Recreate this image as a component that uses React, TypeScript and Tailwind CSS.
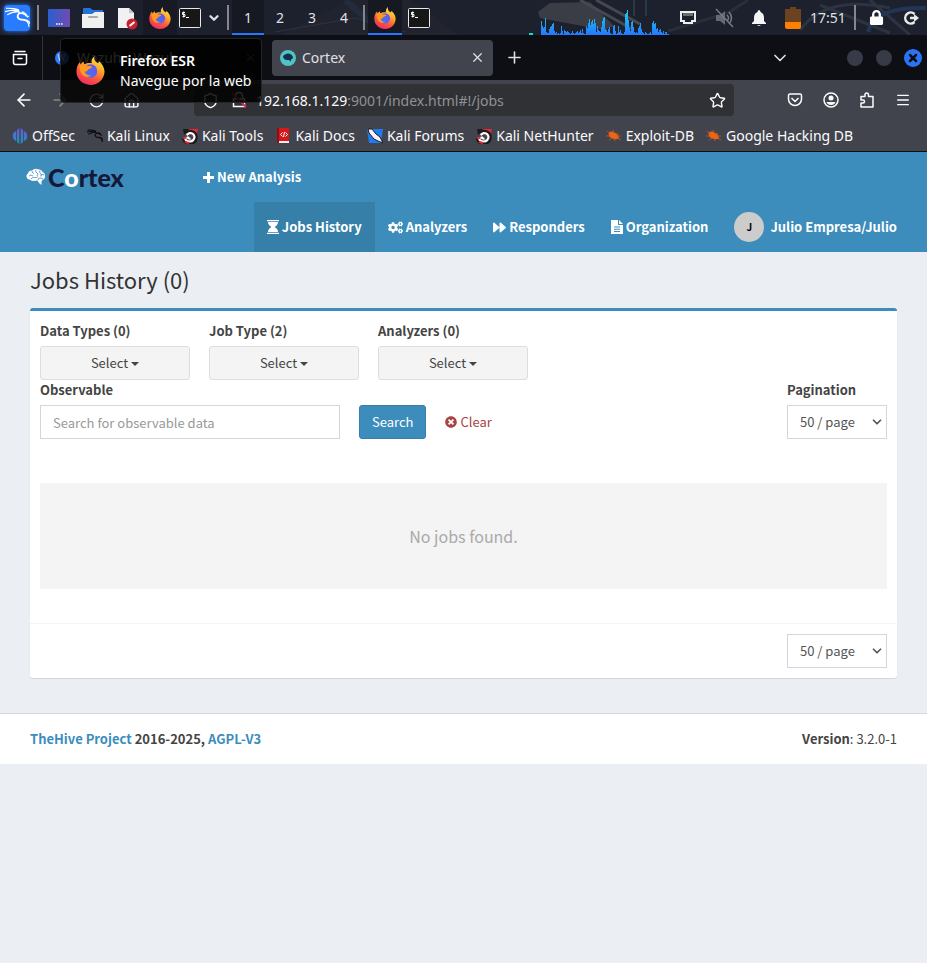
import type { ReactNode } from 'react';
import { FaCogs, FaForward, FaTimesCircle, FaLock } from 'react-icons/fa';
import { GiBrain } from 'react-icons/gi';
import { SiKalilinux } from 'react-icons/si';
import { ArrowLeft, ArrowRight, RotateCw, House, Shield, Star, Menu, X, Plus, ChevronDown } from 'lucide-react';

const uiFont = "font-['Noto_Sans','Open_Sans',sans-serif]";
const pageFont = "font-['Noto_Sans_CJK_SC','Noto_Sans',sans-serif]";

function FirefoxLogo({ className }: { className: string }) {
  return (
    <svg viewBox="0 0 32 32" className={className} aria-hidden="true">
      <defs>
        <linearGradient id="ffBody" x1="0.8" y1="0" x2="0.3" y2="1">
          <stop offset="0" stopColor="#ffe84a" />
          <stop offset="0.35" stopColor="#ffb02a" />
          <stop offset="0.65" stopColor="#ff5b3a" />
          <stop offset="1" stopColor="#f02a66" />
        </linearGradient>
        <linearGradient id="ffGlobe" x1="0" y1="1" x2="1" y2="0">
          <stop offset="0" stopColor="#2f7df5" />
          <stop offset="1" stopColor="#7a4ee8" />
        </linearGradient>
      </defs>
      <path
        fill="url(#ffBody)"
        d="M20.500 0c-1 3 0 6 4 8 .6-.8.8-1.600.6-2.600C29 8.500 31.500 13 31.500 17.500 31 26 24.500 32 16 32S.5 25.500.5 17.500C.5 13 1.500 9.500 4.300 6.500L5 9.500c1-1.800 2.200-2.800 3.500-3.500 0 1.200.2 2.200.8 3 2-1 5-1.500 8-1C16.800 4.500 18 2 20.500 0z"
      />
      <circle cx="16" cy="16.500" r="7.500" fill="url(#ffGlobe)" />
      <path fill="#ff9a1e" d="M4 10.500c3-2.500 7-2 9 .8 2-.8 4-.3 5 .7-1 1.500-3 2-4.500 2.500-.5 2-2 2.500-4 3 1 3 4 4.500 7 4-3 3-9 1.500-11-3C4.500 16 3.500 13 4 10.500z" />
    </svg>
  );
}

function Terminal() {
  return (
    <svg viewBox="0 0 22 20" className="h-5 w-[22px]" aria-hidden="true">
      <rect x="0.5" y="0.5" width="21" height="19" rx="1" fill="#171718" stroke="#e8e8e8" />
      <path d="M6 4.500H3.500v2H6v2H3.500M4.700 3.500v6M7 9.500h3" stroke="#fff" fill="none" />
    </svg>
  );
}

const load = [
  14, 9, 7, 8, 17, 3, 2, 2, 6, 8, 9, 11, 12, 4, 2, 3, 1, 2, 1, 2, 9, 4, 1, 5, 4, 3, 4, 3, 2, 1, 2, 4, 2, 1, 2, 3, 4, 2, 3, 5,
  2, 6, 2, 1, 1, 9, 7, 12, 16, 10, 13, 15, 11, 16, 12, 3, 9, 5, 4, 3, 8, 14, 17, 18, 6, 5, 3, 6, 8, 2, 1, 1, 9, 10, 4, 1,
  2, 9, 3, 5, 2, 1, 1, 3, 21, 22, 25, 15, 7, 4, 13, 14, 8, 3, 2, 3, 2, 7, 9, 12, 6, 3, 2, 1, 3, 2, 1, 1, 2, 3, 1, 12, 14,
  11, 12, 6, 7, 3, 5, 6, 3, 2, 4, 1, 3, 3, 1, 1,
];

function LoadGraph() {
  return (
    <svg viewBox="0 0 140 34" className="h-[34px] w-[140px]" aria-hidden="true">
      <defs>
        <linearGradient id="load" gradientUnits="userSpaceOnUse" x1="0" y1="8" x2="0" y2="34">
          <stop offset="0" stopColor="#1ad6e8" />
          <stop offset="1" stopColor="#2478ff" />
        </linearGradient>
      </defs>
      <path d="M0 33h4" stroke="#18d8c0" strokeWidth="2" />
      {load.map((value, i) => (
        <rect key={i} x={12 + i} y={34 - value} width="1" height={value} fill="url(#load)" />
      ))}
    </svg>
  );
}

function Wallpaper() {
  return (
    <svg
      viewBox="0 0 927 35"
      preserveAspectRatio="none"
      className="absolute inset-0 h-full w-full"
      aria-hidden="true"
    >
      <rect width="927" height="35" fill="#1d202d" />
      <path d="M280 35 330 10l20-10h60l50 35z" fill="#21242f" />
      <path d="M275 32 355 18l50 14" stroke="#2c3442" fill="none" />
      <path d="M345 0 385 35" stroke="#2b4464" strokeWidth="6" opacity=".25" />
      <path d="M538 12 550 3l40-1 24 24-10 4-64-12z" fill="#3a3d45" />
      <path d="m580 0 54 30M596 0l44 24" stroke="#454850" strokeWidth="3" />
      <path d="M634 0v16M646 0v16" stroke="#2a3949" strokeWidth="2" />
      <path d="m668 31 60-18 20-13" stroke="#2a2e39" strokeWidth="3" fill="none" />
      <path d="M800 30c20-26 50-30 90-22M820 5l70 28M870 0l40 35" stroke="#2b3440" strokeWidth="3" fill="none" />
      <path d="M868 32c5-18 24-25 58-24" stroke="#233554" strokeWidth="4" fill="none" />
    </svg>
  );
}

function Divider() {
  return <span className="h-[25px] w-[2px] bg-[#85878d]" />;
}

function DesktopPanel() {
  return (
    <header className="relative h-[35px] bg-[#1d202d] text-[14px] text-[#dfe1e8]">
      <Wallpaper />
      <div className="relative flex h-full items-center">
        <button
          aria-label="Applications"
          className="ml-1 grid h-[26px] w-[26px] place-items-center rounded-sm bg-[#287cff] text-white shadow-[0_0_5px_#287cff]"
        >
          <SiKalilinux size={25} stroke="currentColor" strokeWidth={1} />
        </button>
        <span className="ml-[7px] flex"><Divider /></span>
        <svg viewBox="0 0 22 18" className="ml-[9px] h-[18px] w-[22px]" aria-hidden="true">
          <defs>
            <linearGradient id="desk"><stop stopColor="#2b5fd0" /><stop offset="1" stopColor="#704bb0" /></linearGradient>
          </defs>
          <rect width="22" height="18" rx="1" fill="url(#desk)" />
          <path d="M8 15h1.500M10.500 15H12M13 15h1.500" stroke="#fff" strokeWidth="1.500" />
        </svg>
        <svg viewBox="0 0 22 20" className="ml-3 h-5 w-[22px]" aria-hidden="true">
          <path d="M1 1q0-1 1-1h6l3 2h10v6H1z" fill="#2472d8" />
          <path d="M0 6h10l3-2h9v16H0z" fill="#f0f0f0" />
          <path d="M7 9h8" stroke="#aaa" strokeWidth="2" strokeLinecap="round" />
        </svg>
        <svg viewBox="0 0 22 24" className="ml-3 h-6 w-[22px]" aria-hidden="true">
          <path d="M2 2h11l5 5v15H2z" fill="#f1f1f1" />
          <path d="m13 2 5 5h-5z" fill="#c5c5c5" />
          <circle cx="16" cy="18" r="5.500" fill="#c8202c" />
          <path d="m13.500 20 5-4" stroke="#fff" strokeWidth="2" />
        </svg>
        <span className="ml-[5px] grid h-full w-[34px] place-items-center bg-[#14161f]/60">
          <FirefoxLogo className="h-[22px] w-[22px]" />
        </span>
        <span className="ml-[2px]"><Terminal /></span>
        <ChevronDown size={14} strokeWidth={4} className="ml-[6px]" />
        <span className="ml-[6px] flex"><Divider /></span>
        <nav className="ml-[3px] flex h-full" aria-label="Workspaces">
          {['1', '2', '3', '4'].map((n) => (
            <button
              key={n}
              className={n === '1' ? 'w-8 border-y-2 border-t-transparent border-b-[#2478ff] bg-[#161922]' : 'w-8'}
            >
              {n}
            </button>
          ))}
        </nav>
        <span className="ml-[3px] flex"><Divider /></span>
        <span className="ml-[3px] grid h-full w-[34px] place-items-center border-y-2 border-t-transparent border-b-[#2478ff] bg-[#161922]">
          <FirefoxLogo className="h-[22px] w-[22px]" />
        </span>
        <span className="ml-[6px]"><Terminal /></span>
        <div className="ml-auto flex h-full items-center pr-2">
          <LoadGraph />
          <svg viewBox="0 0 18 16" className="ml-[10px] h-4 w-[18px]" aria-hidden="true">
            <path d="M2 2h14v9h-3v2H5v-2H2z" fill="none" stroke="#eee" strokeWidth="2" />
            <path d="M5 3v3M7 3v3M9 3v3M11 3v3M13 3v3" stroke="#bbb" />
          </svg>
          <svg viewBox="0 0 20 20" className="ml-[18px] h-5 w-5" aria-hidden="true">
            <path d="M1 7h4l5-4v14l-5-4H1z" fill="#666973" />
            <path d="M12 7q3 3 0 6M14 4q5 6 0 12M1 1l17 18" fill="none" stroke="#777a82" strokeWidth="1.500" />
          </svg>
          <svg viewBox="0 0 16 16" className="ml-4 h-4 w-4" aria-hidden="true">
            <path d="M8 0a2 2 0 0 1 1.500 2C12 3 13 5 13 8v3l2 2v1H1v-1l2-2V8c0-3 1-5 3.500-6A2 2 0 0 1 8 0zM6 15h4l-2 1z" fill="#f5f5f5" />
          </svg>
          <svg viewBox="0 0 16 22" className="ml-[18px] h-[22px] w-4" aria-hidden="true">
            <path d="M5 0h6v2h5v14H0V2h5z" fill="#6b4320" />
            <path d="M0 15h16v5q0 2-2 2H2q-2 0-2-2z" fill="#ff7f00" />
          </svg>
          <span className="ml-[9px] w-9">17:51</span>
          <span className="ml-[8px] flex"><Divider /></span>
          <FaLock size={15} className="ml-[13px] text-white" />
          <svg viewBox="0 0 16 16" className="ml-[19px] h-4 w-4" aria-hidden="true">
            <path d="M11.500 4A5.500 5.500 0 1 0 11.500 12" fill="none" stroke="#e8eaec" strokeWidth="2.500" />
            <path d="M7 8h5" stroke="#e8eaec" strokeWidth="2.500" />
            <path d="m11 4 5 4-5 4z" fill="#e8eaec" />
          </svg>
        </div>
      </div>
    </header>
  );
}

function CortexFavicon() {
  return (
    <span className="grid h-4 w-4 place-items-center rounded-full bg-[#4fc3c5] text-[#14304a]">
      <svg viewBox="0 0 10 9" className="h-[9px] w-[10px]" aria-hidden="true">
        <path d="M0 4q0-2 2-2.500Q4 0 6 .5 9 1 10 4q0 2-2 2.500v2L6 7H4Q1 7 0 4z" fill="#12304c" />
      </svg>
    </span>
  );
}

function TabStrip() {
  return (
    <div className="flex h-[45px] items-center bg-[#0e0f14] text-[14px] text-[#e0e0e4]">
      <svg viewBox="0 0 16 16" className="ml-3 h-4 w-4" fill="none" stroke="#fbfbfe" strokeWidth="1.500" strokeLinecap="round" aria-hidden="true">
        <path d="M3 1.500h10M1.500 4.500h13v8q0 2-2 2h-9q-2 0-2-2zM6 8.500h4" />
      </svg>
      <span className="ml-[14px] h-[44px] w-px bg-[#33343a]" />
      <div className="ml-3 flex w-[202px] items-center">
        <span className="grid h-[14px] w-[14px] place-items-center rounded-full bg-[#3278ff] text-[8px]">W.</span>
        <span className="ml-2 flex-1">Wazuh - Wazuh</span>
        <X size={13} strokeWidth={1} />
      </div>
      <div className="ml-[15px] flex h-9 w-[221px] items-center rounded-[4px] bg-[#42444d] px-2">
        <CortexFavicon />
        <span className="ml-[6px] flex-1">Cortex</span>
        <button aria-label="Close tab"><X size={15} strokeWidth={2} /></button>
      </div>
      <button aria-label="New tab" className="ml-3"><Plus size={19} strokeWidth={2} /></button>
      <div className="ml-auto flex items-center pr-[5px]">
        <ChevronDown size={20} strokeWidth={2} />
        <span className="ml-[57px] h-4 w-4 rounded-full bg-[#373b48]" />
        <span className="ml-[13px] h-4 w-4 rounded-full bg-[#373b48]" />
        <button aria-label="Close window" className="ml-3 grid h-[18px] w-[18px] place-items-center rounded-full bg-[#2a73f5] text-[#0e0f14]">
          <X size={12} strokeWidth={5} />
        </button>
      </div>
    </div>
  );
}

function AddressBar() {
  return (
    <div className="flex h-10 items-center text-[14px] text-[#fbfbfe]">
      <button aria-label="Back" className="ml-[14px]"><ArrowLeft size={20} strokeWidth={2} /></button>
      <ArrowRight size={20} strokeWidth={2} className="ml-[16px] text-[#85868c]" />
      <RotateCw size={17} strokeWidth={2} className="ml-[18px]" />
      <House size={17} strokeWidth={2} className="ml-[18px]" />
      <div className="ml-[54px] flex h-8 flex-1 items-center rounded-[4px] bg-[#303135] px-2">
        <Shield size={17} strokeWidth={2} />
        <svg viewBox="0 0 16 18" className="ml-[12px] h-[18px] w-4" fill="none" stroke="#fbfbfe" strokeWidth="1.500" aria-hidden="true">
          <path d="M2.500 8h11v7.500h-11zM4.500 8V5q0-3.500 3.500-3.500T11.500 5v3" />
          <path d="m1 2 14 14" stroke="#e22850" strokeWidth="2" />
        </svg>
        <span className="ml-[9px] flex-1">
          192.168.1.129<span className="text-[#909196]">:9001/index.html#!/jobs</span>
        </span>
        <button aria-label="Bookmark"><Star size={17} strokeWidth={2} /></button>
      </div>
      <div className="flex items-center gap-5 pr-4 pl-[53px]">
        <svg viewBox="0 0 16 16" className="h-4 w-4" fill="none" stroke="currentColor" strokeWidth="1.500" aria-hidden="true">
          <path d="M1.500 3.500q0-1.500 1.500-1.500h10q1.500 0 1.500 1.500V7a6.500 6.500 0 0 1-13 0zM4.500 6 8 9.500 11.500 6" />
        </svg>
        <svg viewBox="0 0 16 16" className="h-4 w-4" aria-hidden="true">
          <circle cx="8" cy="8" r="7" fill="none" stroke="currentColor" strokeWidth="1.500" />
          <circle cx="8" cy="6" r="2.500" fill="currentColor" />
          <path d="M3.500 10h9q-1 3-4.500 3t-4.500-3z" fill="currentColor" />
        </svg>
        <svg viewBox="0 0 16 18" className="h-[18px] w-4" fill="none" stroke="currentColor" strokeWidth="1.500" strokeLinejoin="round" aria-hidden="true">
          <path d="M2 5.500h4V4q0-2 1.700-2T9.500 4v1.500h4.500V16H2v-4h2q1.500 0 1.500-1.500T4 9H2z" />
        </svg>
        <Menu size={16} strokeWidth={2} />
      </div>
    </div>
  );
}

function MagnetIcon() {
  return (
    <svg viewBox="0 0 16 16" className="h-4 w-4" aria-hidden="true">
      <path d="M5 1h11l-3 11z" fill="#ee2438" />
      <path d="M1 1h6L2 7z" fill="#1b1b1f" />
      <path d="M4 6.500 7.500 4Q13 4 13.500 9q0 5-5 5.500Q3 15 2 10" fill="none" stroke="#1b1b1f" strokeWidth="4.500" />
      <path d="M4.500 7 7.500 5Q12 5 12.500 9q-.5 4-4.500 4.500Q4 13.500 3 10.500l3-1q1 1.500 2.500 1" fill="none" stroke="#fff" strokeWidth="2.200" />
      <path d="m1.500 10.500 3-1M3 14l4 1" stroke="#ee2438" strokeWidth="2" />
    </svg>
  );
}

function BugIcon() {
  return (
    <svg viewBox="0 0 16 16" className="h-4 w-4" aria-hidden="true">
      <path d="M2.500 5q3-2.500 5.500-.5 4.500 1 5 6-3.500 1.500-6.500 0-4-1-4-5.500z" fill="#f06414" />
      <path d="m1 3 4 3M0 8h5M3 12l3-2M7 2l1 4M12 5l-2 3M15 12l-5-3M9 13l-1-4M15 8h-4" stroke="#d85a18" strokeWidth=".7" />
    </svg>
  );
}

const bookmarks: { label: string; icon: ReactNode }[] = [
  {
    label: 'OffSec',
    icon: (
      <svg viewBox="0 0 16 16" className="h-4 w-4" aria-hidden="true">
        <defs>
          <linearGradient id="os" x2="0" y2="1"><stop stopColor="#6a58e0" /><stop offset="1" stopColor="#1498c0" /></linearGradient>
        </defs>
        <path d="M7.300 0v16L5 14V2zM8.700 0 11 2v12l-2.300 2zM4.200 3v10Q1 12 .8 8T4.200 3zM11.800 3q3.200 1 3.400 5t-3.400 5z" fill="url(#os)" />
      </svg>
    ),
  },
  { label: 'Kali Linux', icon: <SiKalilinux size={16} stroke="currentColor" strokeWidth={1} className="text-[#0c0c0e]" /> },
  { label: 'Kali Tools', icon: <MagnetIcon /> },
  {
    label: 'Kali Docs',
    icon: (
      <svg viewBox="0 0 16 16" className="h-4 w-4" aria-hidden="true">
        <path d="M2 0h12v15H2z" fill="#d81818" />
        <path d="M3 13h11v2H3z" fill="#eee" />
        <path d="M2 0h2v15H2z" fill="#8e1016" />
        <path d="M7.500 4.500 5.500 6.500l2 2M10.500 4.500l2 2-2 2M9.500 4 8.500 9" stroke="#fff" fill="none" />
      </svg>
    ),
  },
  {
    label: 'Kali Forums',
    icon: (
      <svg viewBox="0 0 16 16" className="h-4 w-4" aria-hidden="true">
        <path d="M0 1h16l-2 14H2z" fill="#1f7cf0" />
        <path d="M1 1h4l4 5 4 3 3 6-5-2-4-2-5-6z" fill="#f5f5f5" stroke="#1a1b20" strokeWidth="1" />
      </svg>
    ),
  },
  { label: 'Kali NetHunter', icon: <MagnetIcon /> },
  { label: 'Exploit-DB', icon: <BugIcon /> },
  { label: 'Google Hacking DB', icon: <BugIcon /> },
];

function Bookmarks() {
  return (
    <nav
      className="flex h-8 items-center gap-3 border-b border-[#0e0f14] pl-3 text-[14px] whitespace-nowrap text-[#fbfbfe]"
      aria-label="Bookmarks"
    >
      {bookmarks.map((b) => (
        <a key={b.label} href="#" className="flex items-center gap-1">
          {b.icon}
          {b.label}
        </a>
      ))}
    </nav>
  );
}

function LauncherTooltip() {
  return (
    <div
      role="tooltip"
      className="absolute top-[38px] left-[60px] flex h-[65px] items-center gap-[15px] rounded-[4px] border border-[#25262a] bg-black/85 pr-[10px] pl-[15px] text-[14px] leading-5 text-white"
    >
      <FirefoxLogo className="h-[29px] w-[29px]" />
      <div>
        <p className="font-semibold">Firefox ESR</p>
        <p>Navegue por la web</p>
      </div>
    </div>
  );
}

function BrainMark() {
  return (
    <svg viewBox="0 0 20 18" className="h-[18px] w-5" aria-hidden="true">
      <path
        d="M1 10Q-.5 7 2 5.500 2.500 2.500 6 2.500 8.500 0 12 1.200q3.500 0 4.500 2.600 2.700 1.200 2.500 4.200.5 3-2.500 4l-1 1.500V17l-2.500-2-1.500-2.500-4 .5Q5 13 4 11.500 1.800 12 1 10z"
        fill="#fff"
      />
      <path
        d="M3 8q2-2 4 0M6 3q0 2 2 2.500M5 11q1-2 3.500-1.500t3.500-1M10 2q-1 2 1 3t0 3M14 2.500q-1 2 .5 3t.5 3M18 7q-2-1-3.500 0M12 12q0-2 2-2t3 1"
        fill="none"
        stroke="#3c8dbc"
        strokeWidth=".8"
      />
    </svg>
  );
}

function AppHeader() {
  const item = 'flex h-[50px] items-center gap-[3px] px-[13px]';
  return (
    <header className="bg-[#3c8dbc] text-[13px] font-bold text-white">
      <div className="flex h-[50px] items-center pl-[26px]">
        <a href="#" className="flex w-[164px] items-center gap-[2px] font-['Lato',sans-serif] text-[25px] leading-none font-black text-[#16183a]">
          <BrainMark />
          <span>C<span className="text-white">o</span>rtex</span>
        </a>
        <a href="#" className={item}>
          <svg viewBox="0 0 11 11" className="h-[11px] w-[11px]" fill="currentColor" aria-hidden="true">
            <path d="M4 0h3v4h4v3H7v4H4V7H0V4h4z" />
          </svg>
          New Analysis
        </a>
      </div>
      <nav className="flex flex-wrap justify-end pr-[17px]">
        <a href="#" className={`${item} bg-[#367fa9]`}>
          <svg viewBox="0 0 12 14" className="h-[14px] w-3" fill="currentColor" aria-hidden="true">
            <path d="M0 0h12v1.300H0zM0 12.700h12V14H0zM1 2h10q0 3-3.500 5Q11 9 11 12H1q0-3 3.500-5Q1 5 1 2z" />
          </svg>
          Jobs History
        </a>
        <a href="#" className={item}><FaCogs size={15} />Analyzers</a>
        <a href="#" className={item}><FaForward size={13} />Responders</a>
        <a href="#" className={item}>
          <svg viewBox="0 0 12 14" className="h-[14px] w-3" fill="currentColor" aria-hidden="true">
            <path fillRule="evenodd" d="M0 0h7v5h5v9H0zM3 6.500v1h6v-1zM3 8.700v1h6v-1zM3 11v1h6v-1zM8 0l4 4H8z" />
          </svg>
          Organization
        </a>
        <a href="#" className="flex h-[50px] items-center gap-[6px] px-[13px]">
          <span className="grid h-[30px] w-[30px] place-items-center rounded-full bg-[#ccc] text-[10px] text-black">J</span>
          Julio Empresa/Julio
        </a>
      </nav>
    </header>
  );
}

function FilterSelect({ id, label }: { id: string; label: string }) {
  return (
    <div className="w-[150px]">
      <label htmlFor={id} className="mb-[5px] block font-bold">{label}</label>
      <button id={id} className="flex h-[34px] w-full items-center justify-center gap-[3px] rounded-[3px] border border-[#ddd] bg-[#f4f4f4] text-[#444]">
        Select
        <span className="mt-[2px] border-x-4 border-t-4 border-x-transparent border-t-[#444]" />
      </button>
    </div>
  );
}

function PageSize({ id, label }: { id: string; label?: string }) {
  return (
    <div className="w-[100px]">
      {label && <label htmlFor={id} className="mb-[5px] block font-bold text-[#444]">{label}</label>}
      <div className="grid items-center">
        <select
          id={id}
          aria-label={label ?? 'Page size'}
          className="col-start-1 row-start-1 h-[34px] w-full appearance-none border border-[#d2d6de] bg-white px-3 text-[#555]"
        >
          <option>50 / page</option>
        </select>
        <ChevronDown size={14} strokeWidth={3} className="pointer-events-none col-start-1 row-start-1 mr-[3px] justify-self-end text-[#555]" />
      </div>
    </div>
  );
}

function JobsPage() {
  return (
    <main className="px-[30px] pt-3 pb-[35px]">
      <h1 className="mb-[14px] text-[22px] leading-[30px] text-[#333]">Jobs History (0)</h1>
      <section className="rounded-[3px] border-t-[3px] border-[#3c8dbc] bg-white shadow-[0_1px_1px_rgba(0,0,0,0.1)]">
        <div className="px-[10px] pt-[10px] pb-[34px]">
          <div className="flex flex-wrap gap-[19px]">
            <FilterSelect id="types" label="Data Types (0)" />
            <FilterSelect id="job" label="Job Type (2)" />
            <FilterSelect id="analyzers" label="Analyzers (0)" />
          </div>
          <form className="flex items-end" onSubmit={(e) => e.preventDefault()}>
            <div className="w-[300px]">
              <label htmlFor="observable" className="mb-[5px] block font-bold">Observable</label>
              <input
                id="observable"
                placeholder="Search for observable data"
                className="block h-[34px] w-full border border-[#d2d6de] bg-white px-3 text-[#555] placeholder:text-[#999]"
              />
            </div>
            <button className="ml-[19px] h-[34px] rounded-[3px] border border-[#367fa9] bg-[#3c8dbc] px-3 text-white">Search</button>
            <button type="button" className="ml-[19px] flex h-[34px] items-center gap-[3px] text-[#a94442]">
              <FaTimesCircle size={12} />
              Clear
            </button>
            <div className="ml-auto">
              <PageSize id="size-top" label="Pagination" />
            </div>
          </form>
          <p className="mt-11 bg-[#f4f4f4] py-10 text-center text-[16px] leading-[26px] text-[#aaa]">No jobs found.</p>
        </div>
        <div className="flex justify-end border-t border-[#f4f4f4] p-[10px]">
          <PageSize id="size-bottom" />
        </div>
      </section>
    </main>
  );
}

export default function App() {
  return (
    <div className="relative min-h-screen bg-[#ebeef3]">
      <div className={uiFont}>
        <DesktopPanel />
        <TabStrip />
        <div className="bg-[#42444d]">
          <AddressBar />
          <Bookmarks />
        </div>
        <LauncherTooltip />
      </div>
      <div className={`${pageFont} text-[13px] leading-5 text-[#444]`}>
        <AppHeader />
        <JobsPage />
        <footer className="flex justify-between border-t border-[#d2d6de] bg-white p-[15px] px-[30px]">
          <p className="font-bold">
            <a href="#" className="text-[#3c8dbc]">TheHive Project</a> 2016-2025, <a href="#" className="text-[#3c8dbc]">AGPL-V3</a>
          </p>
          <p><b>Version</b>: 3.2.0-1</p>
        </footer>
      </div>
    </div>
  );
}
